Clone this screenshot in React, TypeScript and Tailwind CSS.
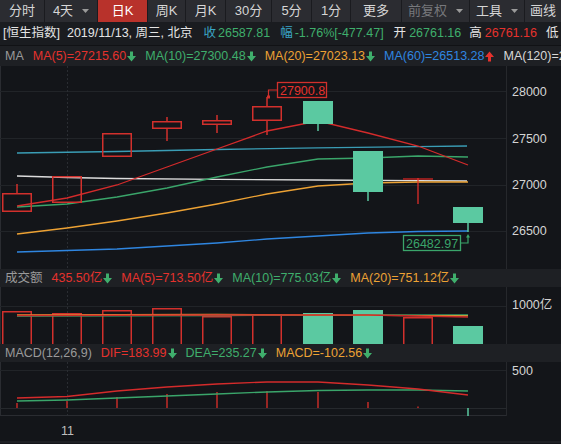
import React from "react";

const RED = "#e5322d";
const GREEN = "#3fae6c";
const ORANGE = "#eda234";
const BLUE = "#2f86e0";
const CANDLE_RED = "#d2302c";
const CANDLE_GREEN = "#5bc9a1";

function Arrow({ dir, color }: { dir: "up" | "down"; color: string }) {
  return (
    <svg width="9" height="11" viewBox="0 0 9 11" className="ml-[1px] shrink-0">
      {dir === "down" ? (
        <path d="M3 0.5h3v4.5h3L4.5 10.5 0 5h3z" fill={color} />
      ) : (
        <path d="M3 10.5h3V6h3L4.5 0.5 0 6h3z" fill={color} />
      )}
    </svg>
  );
}

function Caret() {
  return (
    <svg width="7" height="4" viewBox="0 0 7 4" className="shrink-0">
      <path d="M0 0h7L3.5 4z" fill="#9a9a9a" />
    </svg>
  );
}

const tabs: { t: string; w: string; dd?: boolean; active?: boolean; dim?: boolean }[] = [
  { t: "分时", w: "w-[45px]" },
  { t: "4天", w: "w-[53px]", dd: true },
  { t: "日K", w: "w-[50px]", active: true },
  { t: "周K", w: "w-[38px]" },
  { t: "月K", w: "w-[40px]" },
  { t: "30分", w: "w-[46px]" },
  { t: "5分", w: "w-[40px]" },
  { t: "1分", w: "w-[39px]" },
  { t: "更多", w: "w-[51px]" },
  { t: "前复权", w: "w-[68px]", dd: true, dim: true },
  { t: "工具", w: "w-[55px]", dd: true },
  { t: "画线", w: "w-[36px]" },
];

function Toolbar() {
  return (
    <div className="flex h-[22px] bg-[#2b2c31] text-[13px] shrink-0">
      {tabs.map((b, i) => (
        <div
          key={b.t}
          className={`${b.w} shrink-0 flex items-center justify-center gap-[9px] ${
            i < tabs.length - 1 ? "border-r border-[#1a1b1f]" : ""
          } ${b.active ? "bg-[#b8322b] text-white" : b.dim ? "text-[#77787c]" : "text-[#d6d6d6]"}`}
        >
          <span>{b.t}</span>
          {b.dd && <Caret />}
        </div>
      ))}
    </div>
  );
}

function InfoRow() {
  return (
    <div className="flex items-center h-[24px] pl-[3px] bg-[#1a1c20] border-b border-[#111215] text-[12.5px] whitespace-nowrap overflow-hidden shrink-0 text-[#e4e4e4]">
      <span>[恒生指数]</span>
      <span className="ml-[7px]">2019/11/13, 周三, 北京</span>
      <span className="ml-[11px] text-[#3aa5c6]">收</span>
      <span className="ml-[2px] text-[#3fae6c]">26587.81</span>
      <span className="ml-[10px] text-[#3aa5c6]">幅</span>
      <span className="ml-[2px] text-[#3fae6c]">-1.76%[-477.47]</span>
      <span className="ml-[10px]">开</span>
      <span className="ml-[3px] text-[#3fae6c]">26761.16</span>
      <span className="ml-[8px]">高</span>
      <span className="ml-[3px] text-[#e5322d]">26761.16</span>
      <span className="ml-[9px]">低</span>
    </div>
  );
}

function Item({ text, color, arrow, arrowColor, first }: { text: string; color: string; arrow?: "up" | "down"; arrowColor?: string; first?: boolean }) {
  return (
    <div className={`flex items-center shrink-0 ${first ? "" : "ml-[9px]"}`}>
      <span style={{ color }}>{text}</span>
      {arrow && <Arrow dir={arrow} color={arrowColor || GREEN} />}
    </div>
  );
}

function MaRow() {
  return (
    <div className="flex items-center h-[20px] pl-[5px] bg-[#1e2024] text-[12.5px] whitespace-nowrap overflow-hidden shrink-0">
      <Item first text="MA" color="#9a9a9a" />
      <Item text="MA(5)=27215.60" color={RED} arrow="down" />
      <Item text="MA(10)=27300.48" color={GREEN} arrow="down" />
      <Item text="MA(20)=27023.13" color={ORANGE} arrow="down" />
      <Item text="MA(60)=26513.28" color={BLUE} arrow="up" arrowColor={RED} />
      <Item text="MA(120)=2" color="#d8d8d8" />
    </div>
  );
}

function SubHeader({ children }: { children: React.ReactNode }) {
  return (
    <div className="flex items-center h-[18px] pl-[5px] bg-[#1e2024] text-[12.5px] whitespace-nowrap overflow-hidden shrink-0">
      {children}
    </div>
  );
}

function AxisLabel({ top, text }: { top: string; text: string }) {
  return <span className={`absolute left-[5px] ${top} leading-[16px] text-[12.5px] text-[#d4d4d4]`}>{text}</span>;
}

const GRID = "#212428";

function MainChart() {
  const hollow = [
    { x: 2, y: 194, h: 19, w1: [185, 194] },
    { x: 52, y: 177, h: 27 },
    { x: 102, y: 134, h: 24 },
    { x: 152, y: 122, h: 8, w1: [118, 122], w2: [130, 142] },
    { x: 202, y: 121, h: 5, w1: [116, 121], w2: [126, 134] },
    { x: 252, y: 107, h: 15, w1: [98, 107], w2: [122, 136] },
  ];
  const filled = [
    { x: 303, y: 102, h: 23, w2: [125, 132] },
    { x: 353, y: 152, h: 41, w2: [193, 202] },
    { x: 453, y: 208, h: 16, w2: [224, 233] },
  ];
  return (
    <div className="flex h-[203px] shrink-0">
      <svg width="506" height="203" viewBox="0 67 506 203" className="shrink-0 block">
        <line x1="0.5" y1="67" x2="0.5" y2="270" stroke="#2a2c31" />
        {[92.5, 139.5, 186.5, 232.5].map((y) => (
          <line key={y} x1="0" y1={y} x2="506" y2={y} stroke={GRID} />
        ))}
        <line x1="67.5" y1="67" x2="67.5" y2="270" stroke="#2a2d32" strokeDasharray="2 2" />
        <polyline fill="none" stroke="#3a9db5" strokeWidth="1.3" points="17,154 117,152.5 217,150.5 317,148.8 417,147.6 467,147" />
        <polyline fill="none" stroke="#dcdcdc" strokeWidth="1.3" points="17,177 67,178.5 117,179.5 217,180.3 317,181 417,181.6 467,182" />
        <polyline fill="none" stroke={ORANGE} strokeWidth="1.3" points="17,235 67,229 117,222 167,214 217,205 267,195 318,187 368,184 418,183 468,183" />
        <polyline fill="none" stroke={BLUE} strokeWidth="1.3" points="17,253 117,250 217,244 267,240 318,237 368,234 418,232.5 468,232" />
        <polyline fill="none" stroke="#3aa56a" strokeWidth="1.3" points="17,208 67,205 117,198 167,189 217,178 267,168 318,160 368,159 418,157 468,158" />
        <polyline fill="none" stroke="#d42b2b" strokeWidth="1.3" points="17,207 67,199 117,186 167,168 217,150 267,132 318,122 368,134 418,147 468,166" />
        {hollow.map((c, i) => (
          <g key={i} stroke={CANDLE_RED} strokeWidth="1.5" fill="none">
            <rect x={c.x + 0.75} y={c.y + 0.75} width={28.5} height={c.h - 1.5} />
            {c.w1 && <line x1={c.x + 15} y1={c.w1[0]} x2={c.x + 15} y2={c.w1[1]} />}
            {c.w2 && <line x1={c.x + 15} y1={c.w2[0]} x2={c.x + 15} y2={c.w2[1]} />}
          </g>
        ))}
        {filled.map((c, i) => (
          <g key={i}>
            <rect x={c.x} y={c.y} width={30} height={c.h} fill={CANDLE_GREEN} />
            <line x1={c.x + 15} y1={c.w2[0]} x2={c.x + 15} y2={c.w2[1]} stroke={CANDLE_GREEN} strokeWidth="1.5" />
          </g>
        ))}
        <rect x="403" y="179" width="30" height="2" fill="#8e1f1f" />
        <line x1="418" y1="179" x2="418" y2="205" stroke="#ee2f2a" strokeWidth="1.2" />
        <rect x="267" y="96.5" width="3" height="3" fill={CANDLE_RED} />
        <polyline fill="none" stroke={CANDLE_RED} strokeWidth="1.2" points="268.5,97 268.5,91 277,91" />
        <rect x="277.5" y="83.5" width="49" height="15" fill="#131519" stroke={CANDLE_RED} strokeWidth="1.3" />
        <text x="280" y="95.5" fill={RED} fontSize="12.5" fontFamily="Liberation Sans, sans-serif">27900.8</text>
        <path d="M468 235 l-2 3.5 h4 z" fill="#3aa56a" />
        <polyline fill="none" stroke="#3aa56a" strokeWidth="1.2" points="468,238 468,244 460,244" />
        <rect x="403.5" y="236.5" width="57" height="15" fill="#131519" stroke="#3aa56a" strokeWidth="1.3" />
        <text x="406" y="248.5" fill="#3aa56a" fontSize="12.5" fontFamily="Liberation Sans, sans-serif">26482.97</text>
      </svg>
      <div className="relative flex-1 border-l border-[#26282c]">
        <AxisLabel top="top-[18px]" text="28000" />
        <AxisLabel top="top-[65px]" text="27500" />
        <AxisLabel top="top-[111px]" text="27000" />
        <AxisLabel top="top-[157px]" text="26500" />
      </div>
    </div>
  );
}

function VolChart() {
  const bars = [
    { x: 2, y: 312, g: false },
    { x: 52, y: 314, g: false },
    { x: 102, y: 311, g: false },
    { x: 152, y: 309, g: false },
    { x: 202, y: 317, g: false },
    { x: 252, y: 315, g: false },
    { x: 303, y: 314, g: true },
    { x: 353, y: 311, g: true },
    { x: 403, y: 318, g: false },
    { x: 453, y: 327, g: true },
  ];
  return (
    <div className="flex h-[57px] shrink-0">
      <svg width="506" height="57" viewBox="0 288 506 57" className="shrink-0 block">
        <line x1="0.5" y1="288" x2="0.5" y2="345" stroke="#2a2c31" />
        <line x1="0" y1="307.5" x2="506" y2="307.5" stroke={GRID} />
        <line x1="67.5" y1="288" x2="67.5" y2="345" stroke="#2a2d32" strokeDasharray="2 2" />
        {bars.map((b, i) =>
          b.g ? (
            <rect key={i} x={b.x} y={b.y} width={30} height={345 - b.y} fill={CANDLE_GREEN} />
          ) : (
            <rect key={i} x={b.x + 0.75} y={b.y + 0.75} width={28.5} height={345 - b.y} fill="none" stroke={CANDLE_RED} strokeWidth="1.5" />
          )
        )}
        <polyline fill="none" stroke="#3aa56a" strokeWidth="1.3" points="17,317 217,316.5 468,316" />
        <polyline fill="none" stroke={ORANGE} strokeWidth="1.3" points="17,316 217,315.5 468,316.8" />
        <polyline fill="none" stroke="#c92a2a" strokeWidth="1.3" points="17,316.5 217,316 368,316 468,318" />
      </svg>
      <div className="relative flex-1 border-l border-[#26282c]">
        <AxisLabel top="top-[10px]" text="1000亿" />
      </div>
    </div>
  );
}

function MacdChart() {
  const xs = [17, 67, 117, 167, 217, 267, 318, 368, 418];
  const tops = [404, 402, 398, 395, 393, 392, 393, 403, 407.5];
  return (
    <div className="flex h-[54px] shrink-0">
      <svg width="506" height="54" viewBox="0 363 506 54" className="shrink-0 block">
        <line x1="0.5" y1="363" x2="0.5" y2="417" stroke="#2a2c31" />
        <line x1="0" y1="371.5" x2="506" y2="371.5" stroke={GRID} />
        <line x1="0" y1="409.5" x2="506" y2="409.5" stroke="#26292d" />
        <line x1="0" y1="416.5" x2="506" y2="416.5" stroke="#2a2c31" />
        <line x1="67.5" y1="363" x2="67.5" y2="417" stroke="#2a2d32" strokeDasharray="2 2" />
        {xs.map((x, i) => (
          <line key={x} x1={x} y1={tops[i]} x2={x} y2={409} stroke="#e0302b" strokeWidth="1.3" />
        ))}
        <line x1="468" y1="409" x2="468" y2="417" stroke={CANDLE_GREEN} strokeWidth="1.5" />
        <polyline fill="none" stroke="#3aa56a" strokeWidth="1.3" points="17,402 67,401 117,399 167,397 217,395 267,393 318,391.5 368,391 418,391 468,392" />
        <polyline fill="none" stroke="#d42b2b" strokeWidth="1.3" points="17,399 67,397.5 117,392 167,388 217,385 267,383 318,383 368,386 418,390 468,396" />
      </svg>
      <div className="relative flex-1 border-l border-[#26282c]">
        <AxisLabel top="top-[1px]" text="500" />
      </div>
    </div>
  );
}

function DateAxis() {
  return (
    <div className="relative h-[27px] shrink-0 border-b-[2px] border-[#1e2024]">
      <span className="absolute left-[61px] top-[7px] leading-[16px] text-[12.5px] text-[#bdbdbd]">11</span>
    </div>
  );
}

export default function App() {
  return (
    <div className="w-[561px] h-[444px] overflow-hidden flex flex-col bg-[#131519] font-['Liberation_Sans','Noto_Sans_CJK_SC',sans-serif] select-none">
      <Toolbar />
      <InfoRow />
      <MaRow />
      <MainChart />
      <SubHeader>
        <Item first text="成交额" color="#9a9a9a" />
        <Item text="435.50亿" color={RED} arrow="down" />
        <Item text="MA(5)=713.50亿" color={RED} arrow="down" />
        <Item text="MA(10)=775.03亿" color={GREEN} arrow="down" />
        <Item text="MA(20)=751.12亿" color={ORANGE} arrow="down" />
      </SubHeader>
      <VolChart />
      <SubHeader>
        <Item first text="MACD(12,26,9)" color="#9a9a9a" />
        <Item text="DIF=183.99" color={RED} arrow="down" />
        <Item text="DEA=235.27" color={GREEN} arrow="down" />
        <Item text="MACD=-102.56" color={ORANGE} arrow="down" />
      </SubHeader>
      <MacdChart />
      <DateAxis />
    </div>
  );
}
